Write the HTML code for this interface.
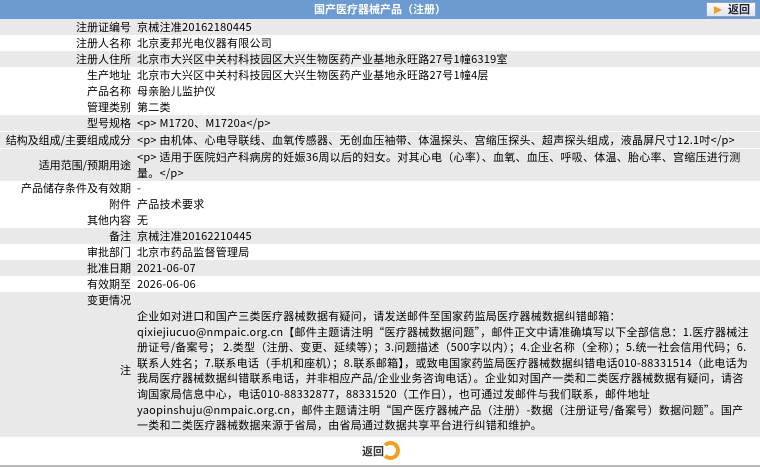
<!DOCTYPE html>
<html><head><meta charset="utf-8"><style>
body{margin:0;width:760px;height:467px;overflow:hidden;background:#fff;font-family:"Noto Sans CJK SC","Liberation Sans",sans-serif;font-size:11px;color:#000}
.hd{position:absolute;left:0;top:0;width:760px;height:19px;background:#6b9bd0;color:#fff;font-weight:bold;text-align:center;line-height:19px}
.btn{position:absolute;left:706px;top:2px;width:50px;height:15px;background:linear-gradient(#fafbfd,#dfe6ef);border:1px solid #8fa3bd;font-size:11px;color:#223;line-height:13px;text-align:right;padding-right:5px;box-sizing:border-box}
.btn i{position:absolute;left:7px;top:3px;width:0;height:0;border-left:8px solid #f0a020;border-top:4px solid transparent;border-bottom:4px solid transparent}
.r{position:absolute;left:0;width:760px;line-height:16px}
.g{background:#e9e9e9}
.l{position:absolute;left:0;width:131px;text-align:right}
.v{position:absolute;left:137px;right:4px;letter-spacing:0.25px}
</style></head><body>
<div class="hd">国产医疗器械产品（注册）<div class="btn"><i></i>返回</div></div>
<div class="r g" style="top:19px;height:16px"><span class="l">注册证编号</span><span class="v">京械注准20162180445</span></div>
<div class="r" style="top:35px;height:16px"><span class="l">注册人名称</span><span class="v">北京麦邦光电仪器有限公司</span></div>
<div class="r g" style="top:51px;height:16px"><span class="l">注册人住所</span><span class="v">北京市大兴区中关村科技园区大兴生物医药产业基地永旺路27号1幢6319室</span></div>
<div class="r" style="top:67px;height:16px"><span class="l">生产地址</span><span class="v">北京市大兴区中关村科技园区大兴生物医药产业基地永旺路27号1幢4层</span></div>
<div class="r" style="top:83px;height:16px"><span class="l">产品名称</span><span class="v">母亲胎儿监护仪</span></div>
<div class="r" style="top:99px;height:16px"><span class="l">管理类别</span><span class="v">第二类</span></div>
<div class="r g" style="top:115px;height:16px"><span class="l">型号规格</span><span class="v">&lt;p&gt; M1720、M1720a&lt;/p&gt;</span></div>
<div class="r g" style="top:131px;height:16px;border-top:1px solid #fff"><span class="l">结构及组成/主要组成成分</span><span class="v">&lt;p&gt; 由机体、心电导联线、血氧传感器、无创血压袖带、体温探头、宫缩压探头、超声探头组成，液晶屏尺寸12.1吋&lt;/p&gt;</span></div>
<div class="r g" style="top:148px;height:32px;border-top:1px solid #fff"><span class="l" style="top:8px">适用范围/预期用途</span><span class="v" style="right:14px">&lt;p&gt; 适用于医院妇产科病房的妊娠36周以后的妇女。对其心电（心率）、血氧、血压、呼吸、体温、胎心率、宫缩压进行测量。&lt;/p&gt;</span></div>
<div class="r" style="top:180px;height:16px"><span class="l">产品储存条件及有效期</span><span class="v">-</span></div>
<div class="r" style="top:196px;height:16px"><span class="l">附件</span><span class="v">产品技术要求</span></div>
<div class="r" style="top:212px;height:16px"><span class="l">其他内容</span><span class="v">无</span></div>
<div class="r g" style="top:228px;height:16px"><span class="l">备注</span><span class="v">京械注准20162210445</span></div>
<div class="r" style="top:244px;height:16px"><span class="l">审批部门</span><span class="v">北京市药品监督管理局</span></div>
<div class="r g" style="top:260px;height:16px"><span class="l">批准日期</span><span class="v">2021-06-07</span></div>
<div class="r" style="top:276px;height:16px"><span class="l">有效期至</span><span class="v">2026-06-06</span></div>
<div class="r g" style="top:292px;height:16px"><span class="l">变更情况</span></div>
<div class="r g" style="top:308px;height:129px;line-height:15.6px"><span class="l" style="top:55px">注</span><span class="v" style="left:137px;right:10px;top:1px">企业如对进口和国产三类医疗器械数据有疑问，请发送邮件至国家药监局医疗器械数据纠错邮箱：qixiejiucuo@nmpaic.org.cn【邮件主题请注明“医疗器械数据问题”，邮件正文中请准确填写以下全部信息：1.医疗器械注册证号/备案号； 2.类型（注册、变更、延续等）；3.问题描述（500字以内）；4.企业名称（全称）；5.统一社会信用代码；6.联系人姓名；7.联系电话（手机和座机）；8.联系邮箱】，或致电国家药监局医疗器械数据纠错电话010-88331514（此电话为我局医疗器械数据纠错联系电话，并非相应产品/企业业务咨询电话）。企业如对国产一类和二类医疗器械数据有疑问，请咨询国家局信息中心，电话010-88332877，88331520（工作日），也可通过发邮件与我们联系，邮件地址yaopinshuju@nmpaic.org.cn，邮件主题请注明“国产医疗器械产品（注册）-数据（注册证号/备案号）数据问题”。国产一类和二类医疗器械数据来源于省局，由省局通过数据共享平台进行纠错和维护。</span></div>
<div style="position:absolute;left:362px;top:444px;font-weight:bold;font-size:11px;color:#333;line-height:14px">返回</div>
<div style="position:absolute;left:381px;top:441px;width:19px;height:19px;border-radius:50%;border:4px solid #f0a020;border-left-color:transparent;box-sizing:border-box"></div>
<div style="position:absolute;left:0;top:465px;width:760px;height:2px;background:#bbb"></div>
</body></html>
